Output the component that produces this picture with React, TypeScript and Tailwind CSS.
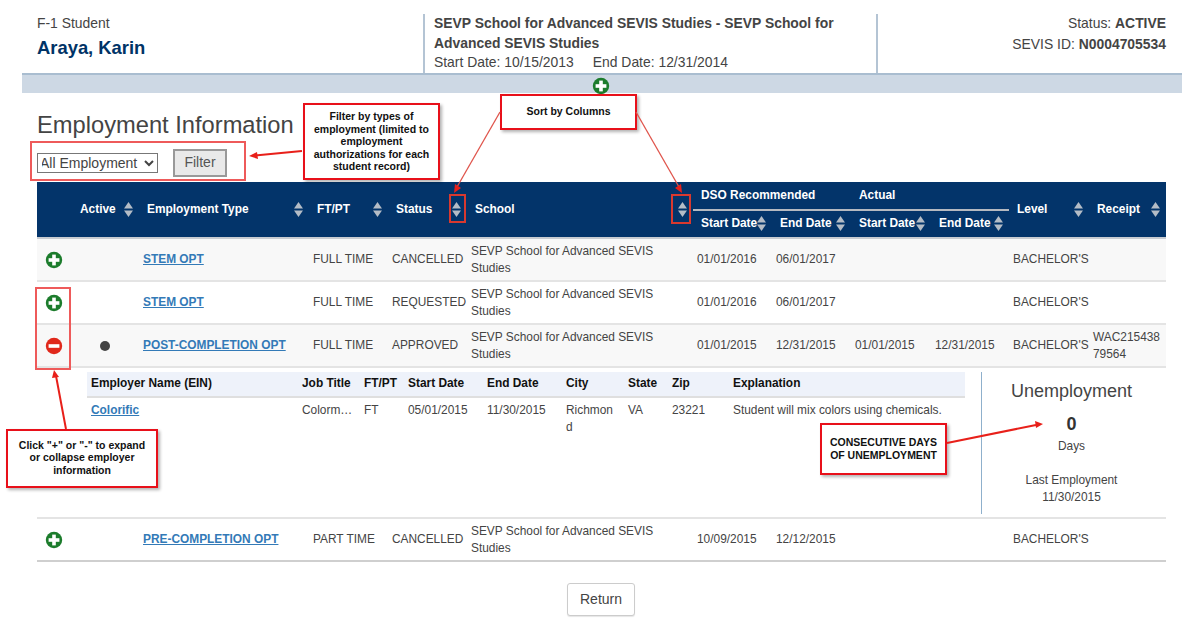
import React from "react";

function PlusIcon() {
  return (
    <svg width="18" height="18" viewBox="0 0 18 18" className="block">
      <circle cx="9" cy="9" r="8.2" fill="#1c7c2c" />
      <rect x="7.2" y="3.6" width="3.6" height="10.8" fill="#fff" />
      <rect x="3.6" y="7.2" width="10.8" height="3.6" fill="#fff" />
    </svg>
  );
}

function MinusIcon() {
  return (
    <svg width="18" height="18" viewBox="0 0 18 18" className="block">
      <circle cx="9" cy="9" r="8.2" fill="#e0281b" />
      <rect x="3.6" y="7.2" width="10.8" height="3.6" fill="#fff" />
    </svg>
  );
}

function Sort() {
  return (
    <svg width="9" height="15" viewBox="0 0 9 15" className="inline-block shrink-0">
      <polygon points="4.5,0 9,6.5 0,6.5" fill="#b4bcc6" />
      <polygon points="0,8.5 9,8.5 4.5,15" fill="#b4bcc6" />
    </svg>
  );
}

function Th({ label, rowSpan }: { label: string; rowSpan?: number }) {
  return (
    <th rowSpan={rowSpan} className="p-0 pl-2 text-left align-middle font-bold text-[11.9px] text-white">
      <div className="flex items-center justify-between pr-[6px]">
        <span className="whitespace-nowrap">{label}</span>
        <Sort />
      </div>
    </th>
  );
}

type Row = {
  open?: boolean;
  active?: boolean;
  type: string;
  time: string;
  status: string;
  d1: string;
  d2: string;
  d3?: string;
  d4?: string;
  receipt?: string;
  shade: boolean;
  h: string;
};

const rows: Row[] = [
  { type: "STEM OPT", time: "FULL TIME", status: "CANCELLED", d1: "01/01/2016", d2: "06/01/2017", shade: true, h: "h-[43px]" },
  { type: "STEM OPT", time: "FULL TIME", status: "REQUESTED", d1: "01/01/2016", d2: "06/01/2017", shade: false, h: "h-[43px]" },
  {
    open: true,
    active: true,
    type: "POST-COMPLETION OPT",
    time: "FULL TIME",
    status: "APPROVED",
    d1: "01/01/2015",
    d2: "12/31/2015",
    d3: "01/01/2015",
    d4: "12/31/2015",
    receipt: "WAC21543879564",
    shade: true,
    h: "h-[43px]",
  },
];

function DataRow({ r }: { r: Row }) {
  return (
    <tr className={(r.shade ? "bg-[#f8f8f8] " : "bg-white ") + r.h + " border-b-2 border-[#e4e4e4] text-[11.9px] text-[#444]"}>
      <td className="p-0 pl-[8px] align-middle">{r.open ? <MinusIcon /> : <PlusIcon />}</td>
      <td className="p-0 align-middle">
        {r.active && <div className="ml-[28px] h-[10px] w-[10px] rounded-full bg-[#444]" />}
      </td>
      <td className="p-0 pl-[4px] align-middle">
        <a className="font-bold text-[#337ab7] underline">{r.type}</a>
      </td>
      <td className="p-0 pl-[4px] align-middle">{r.time}</td>
      <td className="p-0 pl-[4px] align-middle whitespace-nowrap">{r.status}</td>
      <td className="p-0 pl-[4px] pr-[30px] align-middle leading-[17px]">SEVP School for Advanced SEVIS Studies</td>
      <td className="p-0 pl-[4px] align-middle">{r.d1}</td>
      <td className="p-0 pl-[4px] align-middle">{r.d2}</td>
      <td className="p-0 pl-[4px] align-middle">{r.d3}</td>
      <td className="p-0 pl-[4px] align-middle">{r.d4}</td>
      <td className="p-0 pl-[4px] align-middle whitespace-nowrap">BACHELOR'S</td>
      <td className="p-0 pl-[4px] align-middle leading-[17px] break-all">{r.receipt}</td>
    </tr>
  );
}

function Detail() {
  const cols = ["w-[211px]", "w-[62px]", "w-[44px]", "w-[79px]", "w-[79px]", "w-[62px]", "w-[44px]", "w-[61px]", "w-[236px]"];
  const heads = ["Employer Name (EIN)", "Job Title", "FT/PT", "Start Date", "End Date", "City", "State", "Zip", "Explanation"];
  const vals = ["", "Colorm…", "FT", "05/01/2015", "11/30/2015", "Richmond", "VA", "23221", "Student will mix colors using chemicals."];
  return (
    <tr className="h-[151px] border-b-2 border-[#e4e4e4] bg-white">
      <td colSpan={12} className="p-0 align-top">
        <div className="flex pl-[50px] pt-[4px]">
          <div className="w-[878px]">
            <div className="flex h-[26px] items-center border-b-2 border-[#dfdfdf] bg-[#eef2fa] text-[11.9px] font-bold text-[#111]">
              {heads.map((h, i) => (
                <div key={h} className={cols[i] + " pl-[4px]"}>
                  {h}
                </div>
              ))}
            </div>
            <div className="flex pt-[4px] text-[11.9px] leading-[17px] text-[#444]">
              {vals.map((v, i) => (
                <div key={i} className={cols[i] + " pl-[4px] " + (i === 5 ? "pr-[6px] break-all" : "")}>
                  {i === 0 ? <a className="font-bold text-[#337ab7] underline">Colorific</a> : v}
                </div>
              ))}
            </div>
          </div>
          <div className="ml-[16px] flex h-[142px] w-[180px] flex-col items-center border-l border-[#8fb0cc] text-[11.9px] text-[#444]">
            <div className="mt-[8px] text-[18px] leading-[22px]">Unemployment</div>
            <div className="mt-[11px] text-[18px] font-bold leading-[22px] text-[#333]">0</div>
            <div className="mt-[3px] leading-[17px]">Days</div>
            <div className="mt-[17px] leading-[17px]">Last Employment</div>
            <div className="leading-[17px]">11/30/2015</div>
          </div>
        </div>
      </td>
    </tr>
  );
}

function Note({ className, children }: { className: string; children: React.ReactNode }) {
  return (
    <div
      className={
        "absolute flex items-center justify-center border-2 border-[#e8101a] bg-white text-center text-[10.5px] font-bold leading-[12.5px] text-[#111] shadow-[2px_2px_3px_rgba(0,0,0,0.3)] " +
        className
      }
    >
      {children}
    </div>
  );
}

export default function App() {
  return (
    <div className="relative h-[628px] w-[1200px] overflow-hidden bg-white [font-family:'Liberation_Sans',Arial,sans-serif]">
      {/* header */}
      <div className="ml-[22px] mt-[14px] flex h-[59px] w-[1160px] text-[13.9px] leading-[19.5px] text-[#444]">
        <div className="w-[401px] pl-[15px]">
          <div>F-1 Student</div>
          <div className="mt-[2px] text-[18.4px] font-bold leading-[24px] text-[#003366]">Araya, Karin</div>
        </div>
        <div className="w-[453px] border-l-2 border-[#b4c4d4] pl-[9px]">
          <div className="pr-[20px] font-bold">SEVP School for Advanced SEVIS Studies - SEVP School for Advanced SEVIS Studies</div>
          <div>
            Start Date: 10/15/2013<span className="ml-[19px]">End Date: 12/31/2014</span>
          </div>
        </div>
        <div className="flex-1 border-l-2 border-[#b4c4d4] pr-[16px] text-right">
          <div>
            Status: <b>ACTIVE</b>
          </div>
          <div className="mt-[1px]">
            SEVIS ID: <b>N0004705534</b>
          </div>
        </div>
      </div>
      <div className="relative ml-[22px] h-[20px] w-[1160px] border-t-2 border-[#a9bdd0] bg-[#cdd8e4]">
        <div className="absolute left-[570px] top-[2px]">
          <PlusIcon />
        </div>
      </div>

      {/* body */}
      <div className="pl-[37px] pr-[34px]">
        <h1 className="mt-[16px] h-[32px] text-[23.7px] font-normal leading-[32px] text-[#444]">Employment Information</h1>
        <div className="mt-[7px] flex h-[29px] items-center">
          <select className="h-[20px] w-[121px] border border-[#777] bg-white p-0 text-[14px] text-[#444] [text-indent:-2px]">
            <option>All Employment</option>
          </select>
          <button className="ml-[15px] h-[28px] w-[54px] border-2 border-[#999] bg-[#e9e9e9] text-[14px] text-[#555]">Filter</button>
        </div>

        <table className="mt-[5px] w-[1129px] table-fixed border-collapse">
          <colgroup>
            <col className="w-[35px]" />
            <col className="w-[67px]" />
            <col className="w-[170px]" />
            <col className="w-[79px]" />
            <col className="w-[79px]" />
            <col className="w-[226px]" />
            <col className="w-[79px]" />
            <col className="w-[79px]" />
            <col className="w-[80px]" />
            <col className="w-[78px]" />
            <col className="w-[80px]" />
            <col className="w-[77px]" />
          </colgroup>
          <thead className="bg-[#03346a]">
            <tr className="h-[28px]">
              <th rowSpan={2} className="p-0" />
              <Th label="Active" rowSpan={2} />
              <Th label="Employment Type" rowSpan={2} />
              <Th label="FT/PT" rowSpan={2} />
              <Th label="Status" rowSpan={2} />
              <Th label="School" rowSpan={2} />
              <th colSpan={2} className="border-b-2 border-[#b5b9c0] p-0 pl-2 text-left text-[11.9px] font-bold text-white">DSO Recommended</th>
              <th colSpan={2} className="border-b-2 border-[#b5b9c0] p-0 pl-2 text-left text-[11.9px] font-bold text-white">Actual</th>
              <Th label="Level" rowSpan={2} />
              <Th label="Receipt" rowSpan={2} />
            </tr>
            <tr className="h-[28px] border-b-2 border-[#c8ccd2]">
              <Th label="Start Date" />
              <Th label="End Date" />
              <Th label="Start Date" />
              <Th label="End Date" />
            </tr>
          </thead>
          <tbody>
            {rows.map((r, i) => (
              <DataRow key={i} r={r} />
            ))}
            <Detail />
            <DataRow
              r={{ type: "PRE-COMPLETION OPT", time: "PART TIME", status: "CANCELLED", d1: "10/09/2015", d2: "12/12/2015", shade: false, h: "h-[43px] !border-[#cfcfcf]" }}
            />
          </tbody>
        </table>

        <div className="mt-[21px] flex justify-center">
          <button className="ml-[-1px] h-[33px] w-[68px] rounded-[3px] border border-[#ccc] bg-white text-[14px] text-[#444] shadow-[0_1px_1px_rgba(0,0,0,0.1)]">Return</button>
        </div>
      </div>

      {/* annotations */}
      <div className="absolute left-[30px] top-[141px] h-[40px] w-[216px] border-2 border-[#ee5a5a]" />
      <div className="absolute left-[449px] top-[194px] h-[29px] w-[17px] border-2 border-[#d8392f]" />
      <div className="absolute left-[671px] top-[194px] h-[30px] w-[20px] border-2 border-[#d8392f]" />
      <div className="absolute left-[35px] top-[287px] h-[83px] w-[36px] border-2 border-[#ee5a5a]" />

      <Note className="left-[303px] top-[103px] h-[77px] w-[137px]">
        <span>
          Filter by types of
          <br />
          employment (limited to
          <br />
          employment
          <br />
          authorizations for each
          <br />
          student record)
        </span>
      </Note>
      <Note className="left-[500px] top-[94px] h-[36px] w-[137px] !items-start pt-[9px]">Sort by Columns</Note>
      <Note className="left-[6px] top-[429px] h-[59px] w-[152px] pb-[2px]">
        <span>
          Click "+" or "-" to expand
          <br />
          or collapse employer
          <br />
          information
        </span>
      </Note>
      <Note className="left-[820px] top-[423px] h-[52px] w-[127px] pb-[1px]">
        <span>
          CONSECUTIVE DAYS
          <br />
          OF UNEMPLOYMENT
        </span>
      </Note>

      <svg className="pointer-events-none absolute left-0 top-0" width="1200" height="628" viewBox="0 0 1200 628">
        <g stroke="#e8201a" fill="#e8201a">
          <line x1="302" y1="151" x2="255" y2="155.5" strokeWidth="2" />
          <polygon points="249,156 257,152 258,159" stroke="none" />
          <line x1="500" y1="112" x2="457" y2="187" strokeWidth="1.3" stroke="#e0554c" />
          <polygon points="454,193 455,184 461,188" stroke="none" />
          <line x1="636" y1="112" x2="679" y2="187" strokeWidth="1.3" stroke="#e0554c" />
          <polygon points="682,193 675,188 681,184" stroke="none" />
          <line x1="66" y1="429" x2="56" y2="376" strokeWidth="2" />
          <polygon points="54,370 59,377 52,378" stroke="none" />
          <line x1="947" y1="443" x2="1036" y2="425" strokeWidth="2" />
          <polygon points="1043,424 1035,421 1036,428" stroke="none" />
        </g>
      </svg>
    </div>
  );
}
